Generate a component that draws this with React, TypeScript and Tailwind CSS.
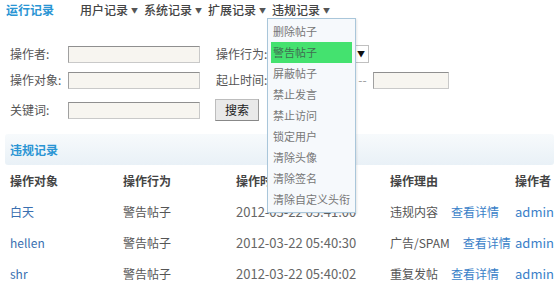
import React from "react";

const font = { fontFamily: '"Noto Sans CJK SC", "Noto Sans", sans-serif' };

const navItems = ["用户记录", "系统记录", "扩展记录", "违规记录"];

const menuItems = [
  "删除帖子",
  "警告帖子",
  "屏蔽帖子",
  "禁止发言",
  "禁止访问",
  "锁定用户",
  "清除头像",
  "清除签名",
  "清除自定义头衔",
];

const rows = [
  { target: "白天", action: "警告帖子", time: "2012-03-22 05:41:00", reason: "违规内容", user: "admin" },
  { target: "hellen", action: "警告帖子", time: "2012-03-22 05:40:30", reason: "广告/SPAM", user: "admin" },
  { target: "shr", action: "警告帖子", time: "2012-03-22 05:40:02", reason: "重复发帖", user: "admin" },
];

function TextInput({ className = "w-[132px]" }: { className?: string }) {
  return (
    <div
      className={`h-[17px] bg-[#f7f5f0] border border-[#c9c9c9] border-t-[#8f8f8f] border-l-[#a0a0a0] ${className}`}
    />
  );
}

export default function App() {
  return (
    <div
      className="relative w-[554px] h-[298px] overflow-hidden bg-white text-[12px] text-[#555]"
      style={font}
    >
      {/* top nav */}
      <div className="flex items-center h-[20px] pl-[6px] leading-none">
        <span className="font-bold text-[#2a95d4] w-[74px]">运行记录</span>
        {navItems.map((n) => (
          <span key={n} className="flex items-center w-[64px] text-[#444] font-medium">
            {n}
            <span className="ml-[3px] text-[7px] text-[#555]">▼</span>
          </span>
        ))}
      </div>

      {/* search form */}
      <div className="flex flex-col gap-[8px] pt-[25px] pl-[10px]">
        <div className="flex items-center h-[18px]">
          <span className="w-[58px]">操作者:</span>
          <TextInput />
          <span className="ml-[16px] w-[52px]">操作行为:</span>
          <div className="h-[18px] w-[101px] bg-white border border-[#c0c0c0] flex items-center justify-end pr-[3px]">
            <span className="text-[8px] text-[#111]">▼</span>
          </div>
        </div>
        <div className="flex items-center h-[18px]">
          <span className="w-[58px]">操作对象:</span>
          <TextInput />
          <span className="ml-[16px] w-[52px]">起止时间:</span>
          <TextInput className="w-[84px]" />
          <span className="w-[21px] text-center text-[#999]">--</span>
          <TextInput className="w-[76px]" />
        </div>
        <div className="flex items-center h-[22px] mt-[2px]">
          <span className="w-[58px]">关键词:</span>
          <TextInput />
          <button className="ml-[15px] h-[22px] w-[44px] bg-[#e9e9e9] border border-[#bdbdbd] border-b-[#888] border-r-[#999] text-[#222] leading-none">
            搜索
          </button>
        </div>
      </div>

      {/* section header */}
      <div className="mt-[13px] ml-[5px] h-[31px] flex items-center pl-[5px] bg-gradient-to-b from-[#f7fafc] to-[#e9f1f7] rounded-[3px]">
        <span className="font-bold text-[#2a95d4]">违规记录</span>
      </div>

      {/* table */}
      <div className="grid grid-cols-[113px_113px_154px_125px_1fr] pl-[10px]">
        {["操作对象", "操作行为", "操作时间", "操作理由", "操作者"].map((h) => (
          <div key={h} className="h-[31px] flex items-center font-bold text-[#444]">
            {h}
          </div>
        ))}
        {rows.map((r) => (
          <React.Fragment key={r.target}>
            <div className="h-[31px] flex items-center text-[#3a6fb0]">{r.target}</div>
            <div className="h-[31px] flex items-center">{r.action}</div>
            <div className="h-[31px] flex items-center text-[13px] text-[#666]">{r.time}</div>
            <div className="h-[31px] flex items-center whitespace-nowrap">
              <span className="mr-[13px]">{r.reason}</span>
              <span className="text-[#3a7fc8]">查看详情</span>
            </div>
            <div className="h-[31px] flex items-center text-[13px] text-[#3a7fc8]">{r.user}</div>
          </React.Fragment>
        ))}
      </div>

      {/* dropdown menu over the page */}
      <div className="absolute left-[267px] top-[18px] w-[89px] bg-[#f6f9fc] border border-[#a9c6da] shadow-[1px_1px_2px_rgba(0,0,0,0.1)] py-[2px] px-[3px]">
        {menuItems.map((m, i) => (
          <div
            key={m}
            className={`h-[21px] flex items-center pl-[2px] text-[11px] whitespace-nowrap ${
              i === 1 ? "bg-[#44e26f] text-[#3f6f52]" : "text-[#777]"
            }`}
          >
            {m}
          </div>
        ))}
      </div>
    </div>
  );
}
